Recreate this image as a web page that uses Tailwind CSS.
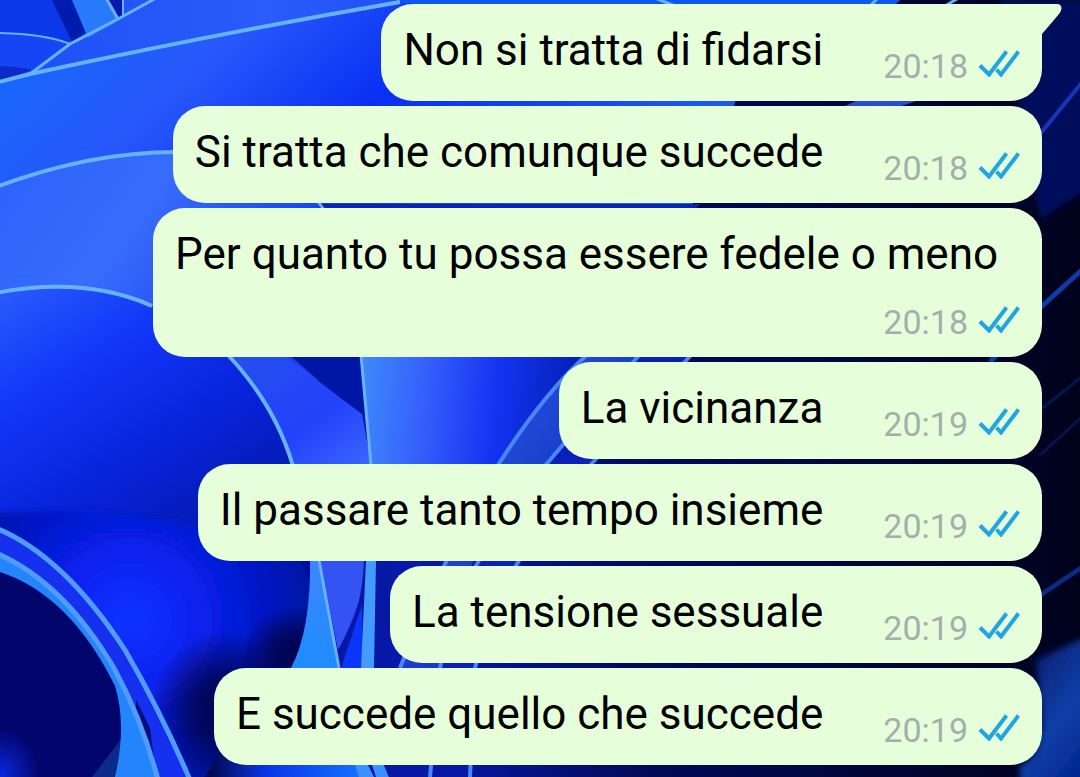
<!DOCTYPE html>
<html lang="it">
<head>
<meta charset="utf-8">
<meta name="viewport" content="width=device-width, initial-scale=1">
<title>Chat</title>
<script src="https://cdn.jsdelivr.net/npm/@tailwindcss/browser@4"></script>
</head>
<body class="bg-[#000433]">
<div class="relative isolate min-h-screen overflow-hidden font-['Roboto',sans-serif]">
  <!-- Wallpaper: overlapping blue ribbons -->
  <svg class="absolute inset-0 -z-10 h-full w-full" viewBox="0 0 1080 777" preserveAspectRatio="xMidYMid slice" aria-hidden="true">
    <defs>
      <linearGradient id="base" x1="0" y1="0" x2="1" y2="0"><stop offset="0" stop-color="#0a22e0"/><stop offset=".4" stop-color="#0718a8"/><stop offset=".6" stop-color="#020a58"/><stop offset=".85" stop-color="#000530"/><stop offset="1" stop-color="#00021c"/></linearGradient>
      <linearGradient id="top" x1="0" y1="0" x2="1" y2="0"><stop offset="0" stop-color="#1d50f5"/><stop offset=".4" stop-color="#2a5cfa"/><stop offset="1" stop-color="#0c35ee"/></linearGradient>
      <linearGradient id="band" x1="0" y1=".3" x2="1" y2=".6"><stop offset="0" stop-color="#1668fb"/><stop offset=".25" stop-color="#2857fb"/><stop offset=".5" stop-color="#0930f2"/><stop offset="1" stop-color="#2060f2"/></linearGradient>
      <linearGradient id="band2" x1="0" y1="0" x2="1" y2=".5"><stop offset="0" stop-color="#2b62fc"/><stop offset=".45" stop-color="#386cfc"/><stop offset=".9" stop-color="#183ff2"/></linearGradient>
      <linearGradient id="dome" x1="0" y1="0" x2=".7" y2="1"><stop offset="0" stop-color="#2a5dfb"/><stop offset=".3" stop-color="#1238f8"/><stop offset=".65" stop-color="#0722d8"/><stop offset="1" stop-color="#041aa4"/></linearGradient>
      <linearGradient id="leaf" x1="0" y1="0" x2="1" y2="1"><stop offset="0" stop-color="#2450ee"/><stop offset=".6" stop-color="#2342fa"/><stop offset="1" stop-color="#3a66ff"/></linearGradient>
      <linearGradient id="petal" gradientUnits="userSpaceOnUse" x1="362" y1="380" x2="570" y2="400"><stop offset="0" stop-color="#3f88fb"/><stop offset=".3" stop-color="#3560fb"/><stop offset=".65" stop-color="#1433f2"/><stop offset="1" stop-color="#0522b8"/></linearGradient>
      <linearGradient id="rib" x1="0" y1="0" x2="1" y2="1"><stop offset="0" stop-color="#2c62f0"/><stop offset="1" stop-color="#0a1aa8"/></linearGradient>
      <radialGradient id="low" gradientUnits="userSpaceOnUse" cx="130" cy="620" r="220"><stop offset="0" stop-color="#0a34ff"/><stop offset=".3" stop-color="#0722f0"/><stop offset=".65" stop-color="#0616c0"/><stop offset="1" stop-color="#040d88"/></radialGradient>
      <radialGradient id="shade"><stop offset="0" stop-color="#020450"/><stop offset=".4" stop-color="#020450" stop-opacity=".85"/><stop offset="1" stop-color="#020450" stop-opacity="0"/></radialGradient>
      <radialGradient id="glow"><stop offset="0" stop-color="#0a28e0"/><stop offset="1" stop-color="#0a28e0" stop-opacity="0"/></radialGradient>
      <linearGradient id="fin" x1="0" y1="0" x2="0" y2="1"><stop offset="0" stop-color="#3b86fa"/><stop offset="1" stop-color="#1f8cff"/></linearGradient>
      <linearGradient id="foot" x1="0" y1="0" x2="1" y2="0"><stop offset="0" stop-color="#020540"/><stop offset=".4" stop-color="#0a35e8"/><stop offset="1" stop-color="#1470ff"/></linearGradient>
      <linearGradient id="corner" x1="0" y1="0" x2=".6" y2="1"><stop offset="0" stop-color="#04125c"/><stop offset=".6" stop-color="#0a3fa8"/><stop offset="1" stop-color="#04248a"/></linearGradient>
      <filter id="mid" x="-20%" y="-20%" width="140%" height="140%"><feGaussianBlur stdDeviation="3"/></filter>
      <filter id="edge"><feGaussianBlur stdDeviation="0.7"/></filter>
    </defs>
    <rect width="1080" height="777" fill="url(#base)"/>
    <path d="M0 0H670L600 80L0 110Z" fill="url(#top)"/>
    <path d="M400 0H900L840 60H400Z" fill="#0c58ee"/>
    <path d="M0 0H75L88 33L70 44L0 32Z" fill="#0b38e8"/>
    <path d="M52 0H74L86 32L72 42Z" fill="#061fae" filter="url(#edge)"/>
    <path d="M72 0H106L120 20L88 38Z" fill="#2979fb"/>
    <path d="M106 0H123V17L118 19Z" fill="#0718b0"/>
    <path d="M0 33Q45 34 70 45L32 72L0 80Z" fill="#1546f6"/>
    <path d="M-10 66Q18 66 32 70L-10 84Z" fill="#092cc8" filter="url(#edge)"/>
    <path d="M0 82L30 74Q220 33 400 2L760 40L732 110L690 210H0Z" fill="url(#band)"/>
    <path d="M0 185Q90 152 175 152L320 204L330 380H0Z" fill="url(#band2)"/>
    <path d="M320 204H700L560 370H330Z" fill="#0b24b5"/>
    <path d="M845 106L862 98H925L890 110Z" fill="#2a4cd0"/>
    <path d="M0 292Q85 276 152 306Q190 322 228 357Q275 405 293 464L310 560H0Z" fill="url(#dome)"/>
    <path d="M228 356H285L362 414L371 464H293Q275 405 228 356Z" fill="url(#leaf)"/>
    <path d="M284 350H361L366 416Q330 392 284 350Z" fill="#0516a5" filter="url(#edge)"/>
    <path d="M361 350H585L590 356Q545 392 498 464H371Z" fill="url(#petal)"/>
    <path d="M585 356Q545 392 500 462Q440 562 400 668H440Q450 562 550 460L640 356Z" fill="url(#rib)"/>
    <path d="M640 356L550 460Q460 562 440 668H475Q500 562 595 460L690 356Z" fill="#0a20b8"/>
    <path d="M-60 520Q60 500 200 526L320 545L330 850H-60Z" fill="url(#low)" filter="url(#mid)"/>
    <ellipse cx="225" cy="710" rx="75" ry="80" fill="url(#shade)"/>
    <ellipse cx="295" cy="655" rx="55" ry="50" fill="url(#shade)"/>
    <path d="M205 777L218 755L240 764H360V777Z" fill="url(#foot)"/>
    <path d="M0 553Q75 585 116 680Q126 725 124 777H0Z" fill="#02056c"/>
    <ellipse cx="0" cy="777" rx="40" ry="50" fill="url(#glow)"/>
    <path d="M92 777L122 738L132 777Z" fill="#0a2a8a" filter="url(#edge)"/>
    <path d="M0 530Q64 556 125 650Q160 710 190 777H160Q140 725 116 678Q70 580 0 555Z" fill="#1530ee"/>
    <path d="M0 552Q60 582 110 666Q142 716 160 777H115Q127 725 115 686Q70 595 0 572Z" fill="#2384fb"/>
    <path d="M136 700L150 728L154 760Q146 738 136 716Z" fill="#030c80" filter="url(#edge)"/>
    <path d="M310 560H320L338 668H291Q311 630 310 560Z" fill="url(#fin)"/>
    <path d="M320 560H366Q365 600 338 650Z" fill="#3354f3"/>
    <path d="M338 655Q362 615 364 560H392V668H341Z" fill="#0718a5"/>
    <path d="M341 668L362 605V668Z" fill="#0a35fb"/>
    <path d="M366 560H376L374 668H361Z" fill="#439bff"/>
    <path d="M355 765H368L374 777H359ZM372 765H384L389 777H376Z" fill="#3c90ff"/>
    <path d="M384 765H472V777H389Z" fill="#0718a5"/>
    <g fill="none" stroke="#66b2fb" filter="url(#edge)">
      <path stroke-width="4" d="M-5 83L30 74Q220 33 400 2"/>
      <path stroke-width="3" d="M30 74L70 44L118 19L158 -3M106 -2L118 19"/>
      <path stroke-width="2" d="M0 33Q45 34 70 44M123 0V16"/>
      <path stroke-width="4" d="M-4 187Q90 152 176 152"/>
      <path stroke-width="4" d="M-4 293Q85 276 152 306M228 355Q275 405 293 466"/>
      <path stroke-width="3" d="M361 355L371 465M317 200L324 210"/>
      <path stroke-width="4" stroke="#4a86fa" d="M588 354Q545 392 500 462Q440 562 400 668M640 354L550 460Q460 562 440 668L430 777M692 354L595 460Q500 562 475 668L470 777"/>
      <path stroke-width="5" stroke="#4f9cfc" d="M-4 528Q64 556 125 650Q160 710 190 780M-4 553Q64 582 115 670Q142 720 158 780"/>
      <path stroke-width="3" d="M319 560L339 668M655 -2L680 8M870 6L880 -4M945 6L962 -4"/>
    </g>
    <!-- Dark folds along the right edge -->
    <path d="M1000 0H1100V180L1040 220Z" fill="#000b5c" filter="url(#mid)"/>
    <g fill="none" stroke="#0a3aa8" filter="url(#edge)">
      <path stroke-width="4" d="M1040 134L1084 80" stroke="#1836b8"/>
      <path stroke-width="5" d="M990 362L1040 308L1084 268"/>
      <path stroke-width="3" opacity=".35" d="M1040 410L1084 375M1040 455L1084 415"/>
      <path stroke-width="5" opacity=".7" d="M1036 598L1084 566"/>
    </g>
    <path d="M1036 660L1100 630V800H1020V765Q1040 760 1042 720Z" fill="url(#corner)" filter="url(#mid)"/>
  </svg>

  <svg class="hidden" aria-hidden="true">
    <symbol id="read" viewBox="0 0 42 28">
      <path d="M2 16.500L11 25.500L28.500 2.500M18.500 20.500L23 25.500L40.500 2.500" fill="none" stroke="#1fa6e2" stroke-width="4"/>
    </symbol>
  </svg>

  <main>
    <ol class="flex flex-col items-end gap-[5px] pt-1 pr-[38px] pb-3 pl-[153px] text-[44px] leading-[52px] text-black">
      <li class="relative flex flex-wrap gap-x-15 rounded-[32px] rounded-tr-none bg-[#e6ffda] pt-5 pr-[22px] pb-[15px] pl-[22px]">
        <svg class="absolute top-0 left-full h-[30px] w-5" viewBox="0 0 20 30" aria-hidden="true"><path d="M-1 0H15Q19 0 19.500 4Q19.500 7 17 10L0 30H-1Z" fill="#e6ffda"/></svg>
        <p class="min-h-[62px]">Non si tratta di fidarsi</p>
        <div class="ml-auto flex h-[52px] items-end gap-2.5 self-end text-[34px] leading-10 text-[#a5aead]"><time>20:18</time><svg class="mb-[9px] h-7 w-[42px]" role="img" aria-label="Letto"><use href="#read"/></svg></div>
      </li>
      <li class="flex flex-wrap gap-x-15 rounded-[32px] bg-[#e6ffda] pt-5 pr-[22px] pb-[15px] pl-[22px]">
        <p class="min-h-[62px]">Si tratta che comunque succede</p>
        <div class="ml-auto flex h-[52px] items-end gap-2.5 self-end text-[34px] leading-10 text-[#a5aead]"><time>20:18</time><svg class="mb-[9px] h-7 w-[42px]" role="img" aria-label="Letto"><use href="#read"/></svg></div>
      </li>
      <li class="flex flex-wrap gap-x-15 rounded-[32px] bg-[#e6ffda] pt-5 pr-[22px] pb-[15px] pl-[22px]">
        <p class="min-h-[62px]">Per quanto tu possa essere fedele o meno</p>
        <div class="ml-auto flex h-[52px] items-end gap-2.5 self-end text-[34px] leading-10 text-[#a5aead]"><time>20:18</time><svg class="mb-[9px] h-7 w-[42px]" role="img" aria-label="Letto"><use href="#read"/></svg></div>
      </li>
      <li class="flex flex-wrap gap-x-15 rounded-[32px] bg-[#e6ffda] pt-5 pr-[22px] pb-[15px] pl-[22px]">
        <p class="min-h-[62px]">La vicinanza</p>
        <div class="ml-auto flex h-[52px] items-end gap-2.5 self-end text-[34px] leading-10 text-[#a5aead]"><time>20:19</time><svg class="mb-[9px] h-7 w-[42px]" role="img" aria-label="Letto"><use href="#read"/></svg></div>
      </li>
      <li class="flex flex-wrap gap-x-15 rounded-[32px] bg-[#e6ffda] pt-5 pr-[22px] pb-[15px] pl-[22px]">
        <p class="min-h-[62px]">Il passare tanto tempo insieme</p>
        <div class="ml-auto flex h-[52px] items-end gap-2.5 self-end text-[34px] leading-10 text-[#a5aead]"><time>20:19</time><svg class="mb-[9px] h-7 w-[42px]" role="img" aria-label="Letto"><use href="#read"/></svg></div>
      </li>
      <li class="flex flex-wrap gap-x-15 rounded-[32px] bg-[#e6ffda] pt-5 pr-[22px] pb-[15px] pl-[22px]">
        <p class="min-h-[62px]">La tensione sessuale</p>
        <div class="ml-auto flex h-[52px] items-end gap-2.5 self-end text-[34px] leading-10 text-[#a5aead]"><time>20:19</time><svg class="mb-[9px] h-7 w-[42px]" role="img" aria-label="Letto"><use href="#read"/></svg></div>
      </li>
      <li class="flex flex-wrap gap-x-15 rounded-[32px] bg-[#e6ffda] pt-5 pr-[22px] pb-[15px] pl-[22px]">
        <p class="min-h-[62px]">E succede quello che succede</p>
        <div class="ml-auto flex h-[52px] items-end gap-2.5 self-end text-[34px] leading-10 text-[#a5aead]"><time>20:19</time><svg class="mb-[9px] h-7 w-[42px]" role="img" aria-label="Letto"><use href="#read"/></svg></div>
      </li>
    </ol>
  </main>
</div>
</body>
</html>
